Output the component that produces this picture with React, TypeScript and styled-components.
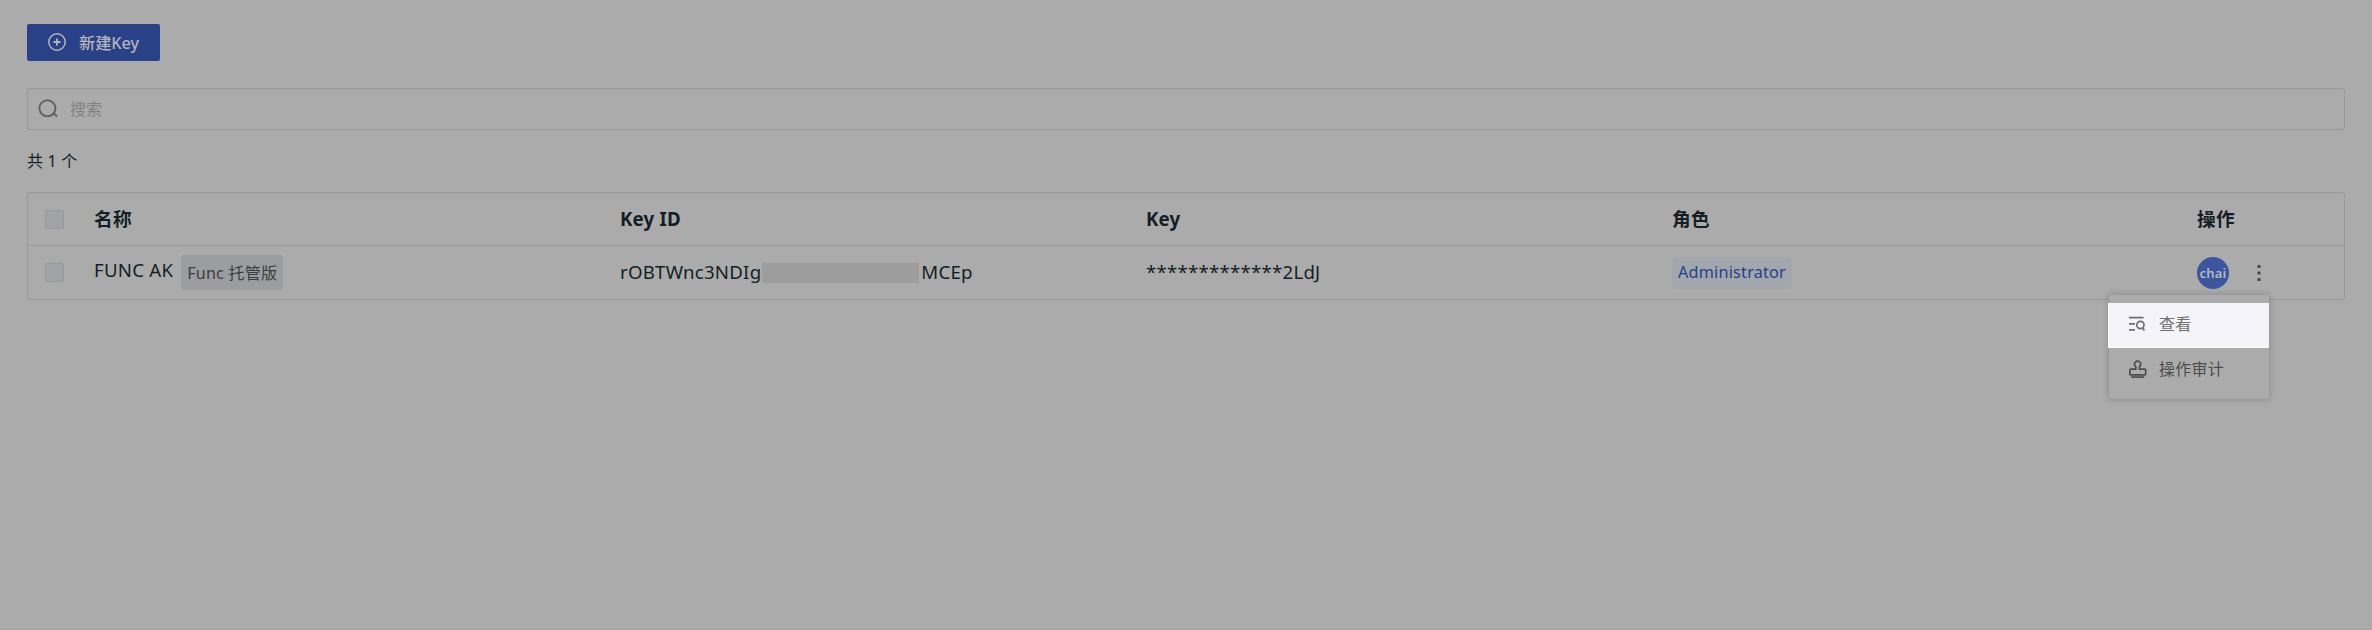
import React from 'react';
import styled, { createGlobalStyle } from 'styled-components';

const Global = createGlobalStyle`
  * { box-sizing: border-box; }
  body {
    margin: 0;
    background: #ababab;
    color: #141e25;
    font-family: "Noto Sans", "Noto Sans CJK SC", sans-serif;
    font-size: 16px;
    overflow: hidden;
  }
`;

const Page = styled.main`
  height: 630px;
  padding: 24px 27px 0;
  border-bottom: 1px solid #a4a4a4;
`;

const CreateButton = styled.button`
  display: flex;
  align-items: center;
  gap: 13px;
  width: 133px;
  height: 37px;
  padding: 0 0 2px 21px;
  border: 0;
  border-radius: 2px;
  background: #294186;
  color: #b4b5ba;
  font: 500 16.2px "Noto Sans", "Noto Sans CJK SC", sans-serif;
  white-space: nowrap;
`;

const SearchBox = styled.div`
  display: flex;
  align-items: center;
  gap: 12px;
  height: 42px;
  margin-top: 27px;
  padding: 0 0 2px 10px;
  border: 1px solid #989898;
  border-radius: 3px;
  color: #828282;
`;

const Total = styled.div`
  margin-top: 19px;
  height: 24px;
  line-height: 24px;
  letter-spacing: 0.2px;
`;

const Table = styled.section`
  margin-top: 19px;
  border: 1px solid #98989a;
  border-radius: 3px;
  font-size: 18.67px;
  letter-spacing: 0.22px;
`;

const Row = styled.div<{ $head?: boolean }>`
  display: grid;
  grid-template-columns: 66px 526px 526px 526px 525px 1fr;
  align-items: center;
  height: ${p => (p.$head ? 52 : 54)}px;
  padding-top: ${p => (p.$head ? 1 : 0)}px;
  font-weight: ${p => (p.$head ? 700 : 400)};
  border-top: ${p => (p.$head ? 0 : 1)}px solid #98989a;
`;

const Cell = styled.div`
  display: flex;
  align-items: center;
  line-height: 26px;
  white-space: nowrap;
`;

const Label = styled.span`
  margin-top: -2px;
`;

const Checkbox = styled.span`
  width: 19px;
  height: 19px;
  margin-left: 17px;
  border: 1px solid #96989c;
  border-radius: 2px;
  background: #a1a3a6;
`;

const Name = styled.span`
  margin-top: -5px;
`;

const Edition = styled.span`
  height: 35px;
  margin: -1px 0 0 8px;
  padding: 0 6px;
  border-radius: 3px;
  background: #9c9da0;
  color: #3c3c3c;
  font-size: 16.1px;
  line-height: 36px;
`;

const Redacted = styled.span`
  width: 157px;
  height: 20px;
  margin: 0 2px 0 1px;
  background: #9d9d9d;
`;

const Role = styled.span`
  height: 32px;
  padding: 0 6px;
  border-radius: 5px;
  background: #a2a6ad;
  color: #284088;
  font-size: 16.2px;
  line-height: 31px;
`;

const Avatar = styled.span`
  width: 32px;
  height: 32px;
  border-radius: 50%;
  background: #3b559f;
  color: #b6bac6;
  font-size: 13px;
  font-weight: 600;
  line-height: 32px;
  text-align: center;
`;

const Menu = styled.div`
  position: absolute;
  left: 2109px;
  top: 295px;
  width: 160px;
  height: 104px;
  padding-top: 8px;
  border-radius: 3px;
  background: #ababab;
  box-shadow: 0 0 7px rgba(0, 0, 0, 0.22);
`;

const MenuItem = styled.div<{ $active?: boolean }>`
  display: flex;
  align-items: center;
  gap: 12px;
  height: 45px;
  margin-left: -1px;
  padding: 0 0 3px 20px;
  border-left: 1px solid ${p => (p.$active ? '#fff' : 'transparent')};
  border-bottom: 1px solid ${p => (p.$active ? '#fff' : 'transparent')};
  background: ${p => (p.$active ? '#f5f4fa' : 'transparent')};
  color: ${p => (p.$active ? '#707070' : '#4c4c4c')};
  line-height: 24px;
  letter-spacing: 0.25px;
`;

const AddIcon = () => (
  <svg width="18" height="18" viewBox="0 0 18 18" fill="none" stroke="currentColor" strokeWidth="1.5">
    <circle cx="9" cy="9" r="8.2" />
    <path d="M9 5.5v7M5.5 9h7" strokeWidth="1.8" />
  </svg>
);

const SearchIcon = () => (
  <svg width="20" height="19" viewBox="0 0 20 19" fill="none" stroke="#626262" strokeWidth="2">
    <circle cx="9.4" cy="9.3" r="8" />
    <path d="M15 14l4.2 3.4" />
  </svg>
);

const MoreDots = styled.svg`
  margin-left: 28px;
`;

const MoreIcon = () => (
  <MoreDots width="4" height="18" viewBox="0 0 4 18" fill="#464646">
    <rect x=".5" y="1" width="3" height="3" rx=".6" />
    <rect x=".5" y="7.5" width="3" height="3" rx=".6" />
    <rect x=".5" y="14" width="3" height="3" rx=".6" />
  </MoreDots>
);

const ViewIcon = () => (
  <svg width="18" height="18" viewBox="0 0 18 18" fill="none" stroke="currentColor" strokeWidth="1.7">
    <path d="M0 2.6h14.5M0 8.8h6M0 14.8h6" />
    <circle cx="11.4" cy="10" r="3.6" />
    <path d="M13.5 12.8l1.9 2.8" />
  </svg>
);

const StampIcon = () => (
  <svg width="18" height="18" viewBox="0 0 18 18" fill="none" stroke="currentColor" strokeWidth="1.7" strokeLinejoin="round">
    <path d="M6.8 9.2V6.8a3.1 3.1 0 1 1 3.6 0v2.4h5a1.3 1.3 0 0 1 1.3 1.3v3.6a.7.7 0 0 1-.7.7H1.5a.7.7 0 0 1-.7-.7v-3.6a1.3 1.3 0 0 1 1.3-1.3z" />
    <path d="M2.2 17.1h13" />
  </svg>
);

export default function App() {
  return (
    <Page>
      <Global />
      <CreateButton><AddIcon />新建Key</CreateButton>
      <SearchBox><SearchIcon />搜索</SearchBox>
      <Total>共 1 个</Total>
      <Table>
        <Row $head>
          <Cell><Checkbox /></Cell>
          <Cell><Label>名称</Label></Cell>
          <Cell><Label>Key ID</Label></Cell>
          <Cell><Label>Key</Label></Cell>
          <Cell><Label>角色</Label></Cell>
          <Cell><Label>操作</Label></Cell>
        </Row>
        <Row>
          <Cell><Checkbox /></Cell>
          <Cell><Name>FUNC AK</Name><Edition>Func 托管版</Edition></Cell>
          <Cell><Label>rOBTWnc3NDIg</Label><Redacted /><Label>MCEp</Label></Cell>
          <Cell><Label>*************2LdJ</Label></Cell>
          <Cell><Role>Administrator</Role></Cell>
          <Cell><Avatar>chai</Avatar><MoreIcon /></Cell>
        </Row>
      </Table>
      <Menu>
        <MenuItem $active><ViewIcon />查看</MenuItem>
        <MenuItem><StampIcon />操作审计</MenuItem>
      </Menu>
    </Page>
  );
}
